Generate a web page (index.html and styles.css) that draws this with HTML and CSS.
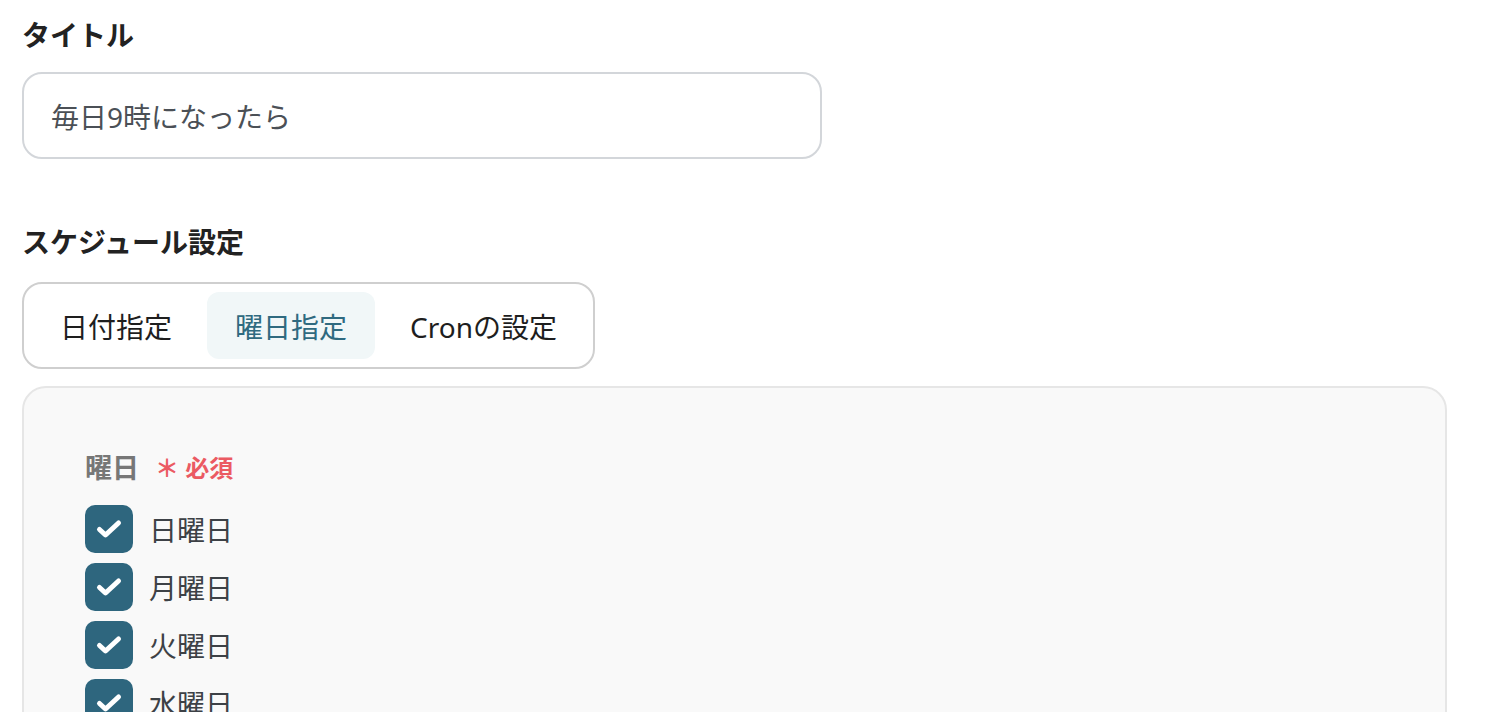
FILE: index.html
```html
<!DOCTYPE html>
<html lang="ja">
<head>
<meta charset="utf-8">
<link rel="stylesheet" href="styles.css">
</head>
<body>
<div class="page">
  <section class="field">
    <div class="label">タイトル</div>
    <div class="input">毎日9時になったら</div>
  </section>
  <section class="field schedule">
    <div class="label">スケジュール設定</div>
    <div class="tabs">
      <div class="tab">日付指定</div>
      <div class="tab active">曜日指定</div>
      <div class="tab">Cronの設定</div>
    </div>
    <div class="panel">
      <div class="sub-label">曜日<span class="req">＊ 必須</span></div>
      <div class="checks">
        <label class="check"><span class="box"><svg viewBox="0 0 32 32" width="32" height="32"><path d="M6.5 16.5l6 5.5L25.5 10" fill="none" stroke="#fff" stroke-width="5" stroke-linecap="round" stroke-linejoin="round"/></svg></span>日曜日</label>
        <label class="check"><span class="box"><svg viewBox="0 0 32 32" width="32" height="32"><path d="M6.5 16.5l6 5.5L25.5 10" fill="none" stroke="#fff" stroke-width="5" stroke-linecap="round" stroke-linejoin="round"/></svg></span>月曜日</label>
        <label class="check"><span class="box"><svg viewBox="0 0 32 32" width="32" height="32"><path d="M6.5 16.5l6 5.5L25.5 10" fill="none" stroke="#fff" stroke-width="5" stroke-linecap="round" stroke-linejoin="round"/></svg></span>火曜日</label>
        <label class="check"><span class="box"><svg viewBox="0 0 32 32" width="32" height="32"><path d="M6.5 16.5l6 5.5L25.5 10" fill="none" stroke="#fff" stroke-width="5" stroke-linecap="round" stroke-linejoin="round"/></svg></span>水曜日</label>
        <label class="check"><span class="box"><svg viewBox="0 0 32 32" width="32" height="32"><path d="M6.5 16.5l6 5.5L25.5 10" fill="none" stroke="#fff" stroke-width="5" stroke-linecap="round" stroke-linejoin="round"/></svg></span>木曜日</label>
      </div>
    </div>
  </section>
</div>
</body>
</html>
```
FILE: styles.css
```css
html, body {
  margin: 0;
  padding: 0;
  background: #ffffff;
  overflow: hidden;
}
body {
  font-family: "Noto Sans", "Noto Sans CJK JP", sans-serif;
  color: #222;
}
.page {
  padding: 14px 62px 0 22px;
}
.label {
  font-size: 28px;
  font-weight: 700;
  line-height: 42px;
  color: #222;
}
.input {
  margin-top: 16px;
  width: 800px;
  box-sizing: border-box;
  height: 87px;
  border: 2px solid #d3d6da;
  border-radius: 20px;
  padding-left: 27px;
  display: flex;
  align-items: center;
  font-size: 28px;
  color: #4b5056;
}
.schedule {
  margin-top: 62px;
}
.tabs {
  margin-top: 19px;
  display: inline-flex;
  gap: 7px;
  padding: 8px;
  border: 2px solid #cfcfcf;
  border-radius: 20px;
  box-sizing: border-box;
  height: 87px;
  align-items: center;
}
.tab {
  height: 67px;
  padding: 0 28px;
  display: flex;
  align-items: center;
  font-size: 28px;
  color: #1e1e1e;
  border-radius: 12px;
}
.tab.active {
  background: #f1f7f8;
  color: #2f6a80;
}
.panel {
  margin-top: 17px;
  width: 1425px;
  box-sizing: border-box;
  min-height: 400px;
  background: #f9f9f9;
  border: 2px solid #e6e6e6;
  border-radius: 24px;
  padding: 60px 61px;
}
.sub-label {
  font-size: 27px;
  font-weight: 700;
  color: #777;
  line-height: 40px;
  display: flex;
  align-items: center;
}
.req {
  margin-left: 16px;
  font-size: 24px;
  color: #eb5a62;
}
.checks {
  margin-top: 17px;
  display: flex;
  flex-direction: column;
  gap: 10px;
}
.check {
  display: flex;
  align-items: center;
  gap: 16px;
  font-size: 28px;
  color: #3d4146;
}
.box {
  width: 48px;
  height: 48px;
  border-radius: 10px;
  background: #2e667e;
  display: flex;
  align-items: center;
  justify-content: center;
}
```
